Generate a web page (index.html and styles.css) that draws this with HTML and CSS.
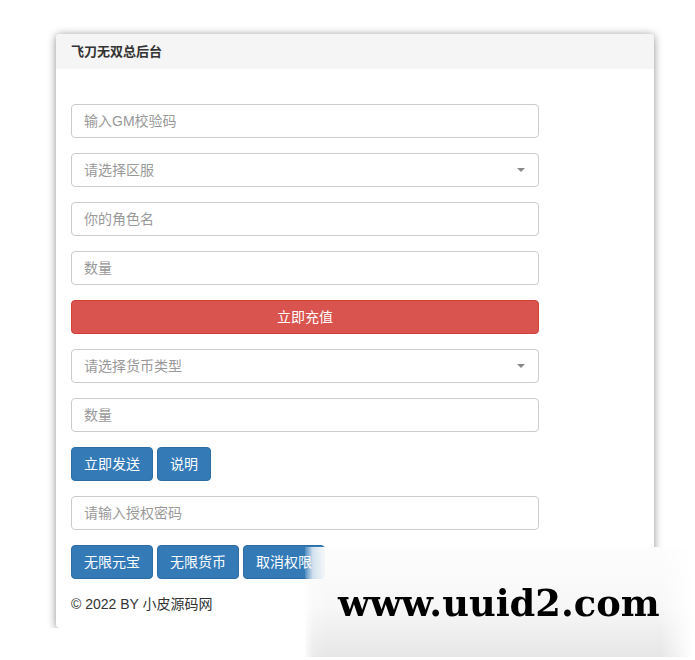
FILE: index.html
```html
<!DOCTYPE html>
<html lang="zh-CN">
<head>
<meta charset="utf-8">
<title>飞刀无双总后台</title>
<link rel="stylesheet" href="styles.css">
</head>
<body>
<div class="page">
  <div class="panel">
    <div class="panel-heading">飞刀无双总后台</div>
    <div class="panel-body">
      <div class="form-group"><input class="form-control" type="text" placeholder="输入GM校验码"></div>
      <div class="form-group">
        <div class="select"><span class="ph">请选择区服</span><span class="caret"></span></div>
      </div>
      <div class="form-group"><input class="form-control" type="text" placeholder="你的角色名"></div>
      <div class="form-group"><input class="form-control" type="text" placeholder="数量"></div>
      <div class="form-group"><button class="btn btn-danger btn-block">立即充值</button></div>
      <div class="form-group">
        <div class="select"><span class="ph">请选择货币类型</span><span class="caret"></span></div>
      </div>
      <div class="form-group"><input class="form-control" type="text" placeholder="数量"></div>
      <div class="form-group btn-row">
        <button class="btn btn-primary">立即发送</button>
        <button class="btn btn-primary">说明</button>
      </div>
      <div class="form-group"><input class="form-control" type="text" placeholder="请输入授权密码"></div>
      <div class="form-group btn-row">
        <button class="btn btn-primary">无限元宝</button>
        <button class="btn btn-primary">无限货币</button>
        <button class="btn btn-primary">取消权限</button>
      </div>
      <div class="footer">© 2022 BY 小皮源码网</div>
    </div>
  </div>
</div>
<div class="watermark"><span>www.uuid2.com</span></div>
</body>
</html>
```
FILE: styles.css
```css
html, body {
  margin: 0;
  padding: 0;
  background: #fff;
}
body {
  font-family: "Liberation Sans", "Noto Sans CJK SC", sans-serif;
  font-size: 14px;
  line-height: 20px;
  color: #333;
}
.page {
  padding: 34px 0 0 56px;
}
.panel {
  width: 598px;
  background: #fff;
  border-radius: 4px;
  box-shadow: 0 1px 9px rgba(0, 0, 0, 0.45);
  overflow: hidden;
}
.panel-heading {
  background: #f5f5f5;
  height: 35px;
  box-sizing: border-box;
  padding: 8px 15px;
  font-size: 13px;
  font-weight: bold;
  line-height: 19px;
  color: #333;
}
.panel-body {
  padding: 35px 15px 14px 15px;
}
.form-group {
  margin-bottom: 15px;
  width: 468px;
}
.form-control, .select {
  display: block;
  width: 468px;
  height: 34px;
  box-sizing: border-box;
  padding: 6px 12px;
  border: 1px solid #ccc;
  border-radius: 4px;
  font-family: "Liberation Sans", "Noto Sans CJK SC", sans-serif;
  font-size: 14px;
  line-height: 20px;
  color: #555;
  background: #fff;
  outline: none;
  margin: 0;
}
.form-control::placeholder {
  color: #999;
}
.select {
  display: flex;
  align-items: center;
  justify-content: space-between;
}
.ph {
  color: #999;
}
.caret {
  width: 0;
  height: 0;
  border-left: 4px solid transparent;
  border-right: 4px solid transparent;
  border-top: 4px solid #888;
  margin-right: 1px;
}
.btn {
  display: inline-block;
  height: 34px;
  box-sizing: border-box;
  padding: 6px 12px;
  border: 1px solid transparent;
  border-radius: 4px;
  font-family: "Liberation Sans", "Noto Sans CJK SC", sans-serif;
  font-size: 14px;
  line-height: 20px;
  color: #fff;
  cursor: pointer;
  margin: 0;
}
.btn-primary {
  background: #337ab7;
  border-color: #2e6da4;
}
.btn-danger {
  background: #d9534f;
  border-color: #d43f3a;
}
.btn-block {
  display: block;
  width: 468px;
}
.btn-row {
  display: flex;
  gap: 4px;
}
.footer {
  line-height: 20px;
  color: #333;
}
.watermark {
  position: absolute;
  left: 305px;
  top: 547px;
  width: 388px;
  height: 110px;
  background: linear-gradient(to bottom, #fdfdfd 0%, #f7f7f7 55%, #e6e6e6 100%);
  -webkit-mask-image: linear-gradient(to right, rgba(0,0,0,0.15) 0, rgba(0,0,0,0.8) 8px, #000 22px, #000 355px, transparent 388px);
  mask-image: linear-gradient(to right, rgba(0,0,0,0.15) 0, rgba(0,0,0,0.8) 8px, #000 22px, #000 355px, transparent 388px);
  box-sizing: border-box;
  padding: 36px 0 0 33px;
}
.watermark span {
  font-family: "DejaVu Serif", serif;
  font-weight: bold;
  font-size: 36.8px;
  line-height: 40px;
  color: #000;
  white-space: nowrap;
}
```
